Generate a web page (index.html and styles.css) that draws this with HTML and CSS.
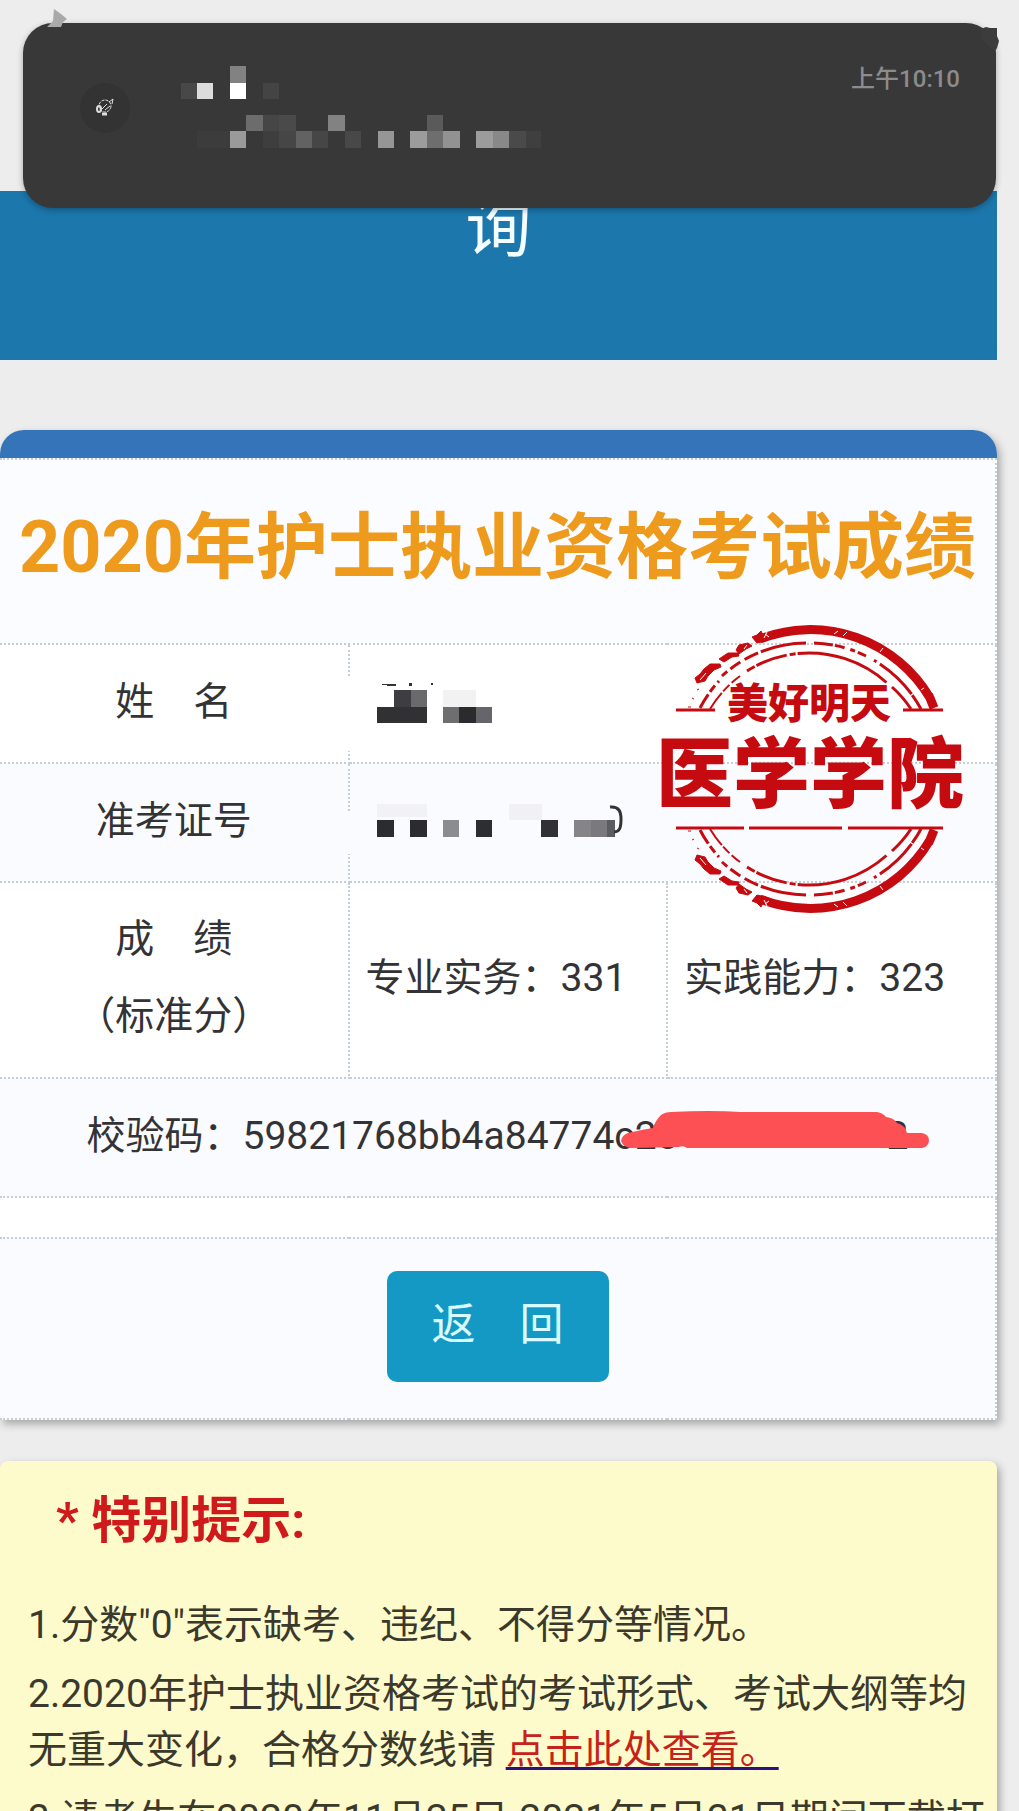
FILE: index.html
```
<!DOCTYPE html>
<html lang="zh-CN">

<head>
    <meta charset="UTF-8">
    <meta name="viewport" content="width=device-width, initial-scale=1">
    <title>成绩查询</title>
    <link rel="stylesheet" href="styles.css">
</head>

<body>

    <aside class="notice">
        <svg class="smudge smudge-left" viewBox="0 0 24 18" aria-hidden="true">
            <path d="M0 18 L6 12 L7 0 L14 5 L20 10 L16 13 L14 18 Z" fill="#a9a9a9" />
        </svg>
        <svg class="smudge smudge-right" viewBox="0 0 18 26" aria-hidden="true">
            <path d="M0 3 L5 1 L9 2 L16 2 L16 10 L18 15 L16 22 L14 25 L8 20 L0 12 Z" fill="#3c3c3c" />
        </svg>
        <svg class="avatar" viewBox="0 0 52 52" aria-hidden="true">
            <circle cx="26" cy="26" r="25" fill="#333" />
            <g fill="none" stroke="#ddd" stroke-width="1">
                <circle cx="26" cy="24" r="6" stroke-dasharray="3 1" />
                <path d="M23 27 L28 22 M26 28 L31 24 M30 20 L34 17 L33 22" />
                <ellipse cx="20" cy="27" rx="2" ry="3" stroke-width="2" />
                <path d="M23 32 H28" stroke-width="3" />
            </g>
        </svg>
        <!-- sender and message are hidden -->
        <svg class="mosaic" viewBox="0 0 360 84" shape-rendering="crispEdges" aria-hidden="true">
            <rect x="49" y="0" width="16" height="17" fill="#828282" />
            <rect x="0" y="17" width="16" height="16" fill="#484848" />
            <rect x="16" y="17" width="16" height="16" fill="#dcdcdc" />
            <rect x="49" y="17" width="16" height="16" fill="#fff" />
            <rect x="82" y="17" width="16" height="16" fill="#444" />
            <rect x="65" y="49" width="17" height="16" fill="#6c6c6c" />
            <rect x="82" y="49" width="16" height="16" fill="#464646" />
            <rect x="98" y="49" width="17" height="16" fill="#4a4a4a" />
            <rect x="147" y="49" width="17" height="16" fill="#828282" />
            <rect x="246" y="49" width="16" height="16" fill="#5a5a5a" />
            <rect x="16" y="65" width="33" height="17" fill="#3c3c3c" />
            <rect x="49" y="65" width="16" height="17" fill="#9a9a9a" />
            <rect x="82" y="65" width="16" height="17" fill="#3e3e3e" />
            <rect x="98" y="65" width="17" height="17" fill="#464646" />
            <rect x="115" y="65" width="16" height="17" fill="#626262" />
            <rect x="131" y="65" width="16" height="17" fill="#464646" />
            <rect x="164" y="65" width="16" height="17" fill="#484848" />
            <rect x="197" y="65" width="16" height="17" fill="#969696" />
            <rect x="229" y="65" width="17" height="17" fill="#9c9c9c" />
            <rect x="246" y="65" width="16" height="17" fill="#6e6e6e" />
            <rect x="262" y="65" width="17" height="17" fill="#929292" />
            <rect x="295" y="65" width="17" height="17" fill="#9c9c9c" />
            <rect x="312" y="65" width="16" height="17" fill="#888" />
            <rect x="328" y="65" width="17" height="17" fill="#4a4a4a" />
            <rect x="345" y="65" width="15" height="17" fill="#3f3f3f" />
        </svg>
        <time class="time">上午10:10</time>
    </aside>

    <header class="banner">询</header>

    <main>
        <section class="card">
            <div class="card-top"></div>
            <table>
                <colgroup>
                    <col class="col-label">
                    <col class="col-score">
                    <col>
                </colgroup>
                <tr class="title">
                    <td colspan="3">
                        <h1>2020年护士执业资格考试成绩</h1>
                    </td>
                </tr>
                <tr class="row">
                    <th scope="row">姓　名</th>
                    <td colspan="2" class="masked">
                        <svg class="mask" viewBox="0 0 240 74" shape-rendering="crispEdges" aria-hidden="true">
                            <rect width="12" height="74" fill="#fff" />
                            <path d="M37 7 L53 7 V9 L46 9 Z M66 6 h3 v3 h-3 Z M88 6 h2 v2 h-2 Z" fill="#333" />
                            <rect x="51" y="13" width="17" height="17" fill="#3e3e42" />
                            <rect x="68" y="13" width="16" height="17" fill="#6a6a6d" />
                            <rect x="34" y="30" width="50" height="16" fill="#313134" />
                            <rect x="100" y="13" width="33" height="17" fill="#f2f2f3" />
                            <rect x="100" y="30" width="16" height="16" fill="#6e6e71" />
                            <rect x="116" y="30" width="17" height="16" fill="#2b2b2e" />
                            <rect x="133" y="30" width="16" height="16" fill="#66666a" />
                        </svg>
                    </td>
                </tr>
                <tr class="row tint">
                    <th scope="row">准考证号</th>
                    <td colspan="2" class="masked">
                        <svg class="mask" viewBox="0 0 290 74" aria-hidden="true">
                            <rect y="16" width="12" height="42" fill="#f9fbfe" />
                            <g shape-rendering="crispEdges">
                                <rect x="34" y="8" width="50" height="13" fill="#f2f2f5" />
                                <rect x="166" y="8" width="33" height="16" fill="#f1f1f3" />
                                <rect x="34" y="24" width="17" height="17" fill="#2c2c30" />
                                <rect x="67" y="24" width="17" height="17" fill="#2c2c30" />
                                <rect x="100" y="24" width="16" height="17" fill="#8c8c8f" />
                                <rect x="133" y="24" width="16" height="17" fill="#2e2e32" />
                                <rect x="198" y="24" width="17" height="17" fill="#313135" />
                                <rect x="231" y="24" width="17" height="17" fill="#858588" />
                                <rect x="248" y="24" width="16" height="17" fill="#7a7a7e" />
                                <rect x="264" y="24" width="8" height="17" fill="#5c5c60" />
                            </g>
                            <path d="M267 11 C276 10 278 16 278 23 C278 31 277 36 271 36" fill="none" stroke="#333" stroke-width="3" />
                        </svg>
                    </td>
                </tr>
                <tr class="row">
                    <th scope="row" class="two-lines">成　绩<br>（标准分）</th>
                    <td>专业实务：331</td>
                    <td>实践能力：323</td>
                </tr>
                <tr class="row tint">
                    <td colspan="3" class="code">校验码：59821768bb4a84774c28<span class="redacted"><svg viewBox="0 0 308 40" aria-hidden="true">
                                <path d="M7 22 Q24 18 32 17 Q34 10 40 4 Q44 1 50 1 Q90 -1 120 1 H256 Q262 2 265 6 Q273 7 276 12 Q284 14 286 22 H301 Q308 23 308 30 Q307 36 301 37 H66 Q62 34 58 36 L10 37 Q2 36 0 30 Q1 24 7 22 Z" fill="#fd5054" />
                            </svg></span>2</td>
                </tr>
                <tr class="gap">
                    <td colspan="3"></td>
                </tr>
                <tr class="action tint">
                    <td colspan="3"><button type="button" class="back">返　回</button></td>
                </tr>
            </table>

            <svg class="stamp" viewBox="0 0 340 320" role="img" aria-label="美好明天医学学院">
                <defs>
                    <g id="ring" fill="none" stroke="#c60b10">
                        <path d="M120 29 A139 139 0 0 1 290 88 L294 98" stroke-width="9" />
                        <path d="M60 98 A126 126 0 0 1 79 71" stroke-width="3" stroke-dasharray="16 3 8 4" />
                        <path d="M82 66 A126 126 0 0 1 166 33" stroke-width="3" stroke-dasharray="7 4 12 5 15 3 50 2" />
                        <path d="M174 33 A126 126 0 0 1 281 99" stroke-width="3" stroke-dasharray="19 2 10 6 5 3 9 9 3 4 44 1" />
                        <path d="M70 99 A116 116 0 0 1 100 66" stroke-width="2" stroke-dasharray="20 2 9 3" />
                        <path d="M107 61 A116 116 0 0 1 247 73" stroke-width="3" stroke-dasharray="9 2 32 3 6 2 96 2" />
                        <path d="M252 77 A116 116 0 0 1 271 99" stroke-width="3" />
                        <path d="M36 100 H75 M263 100 H303" stroke-width="3" />
                        <!-- worn pieces of the outer ring -->
                        <path d="M55 68 L60 64 L64 59 L70 54 L80 54 L81 57 L74 60 L68 66 L65 71 L57 73 Z M79 49 L88 43 L98 43 L99 46 L92 47 L84 52 Z M96 40 L99 35 L108 33 L112 36 L106 39 L99 44 Z M112 27 L117 25 L121 21 L126 31 L117 33 Z M287 82 L293 84 L291 88 Z" fill="#c60b10" stroke-width="1" />
                        <path d="M60 70 L66 63 M104 39 L107 35 M124 28 L127 22 M125 24 L129 27 M194 24 L198 21 M203 26 L207 22 M240 42 L243 38 M281 80 L284 78" stroke="#fff" stroke-width="1" />
                        <path d="M52 88 L54 89 M48 97 L51 97 M57 80 L59 79" stroke-width="1" />
                    </g>
                </defs>
                <use href="#ring" />
                <use href="#ring" transform="matrix(1 0 0 -1 0 318)" />
                <path d="M75 218 H104 M109 218 H202 M208 218 H263" stroke="#c60b10" stroke-width="3" />
                <text class="stamp-small" x="169" y="108">美好明天</text>
                <text class="stamp-big" x="170" y="192">医学学院</text>
            </svg>
        </section>

        <section class="tips">
            <h2>* 特别提示:</h2>
            <p>1.分数"0"表示缺考、违纪、不得分等情况。</p>
            <p>2.2020年护士执业资格考试的考试形式、考试大纲等均无重大变化，合格分数线请 <a href="#">点击此处查看。</a></p>
            <p>3.请考生在2020年11月25日-2021年5月31日期间下载打印成绩单。</p>
        </section>
    </main>

</body>

</html>
```
FILE: styles.css
```
* {
    box-sizing: border-box;
}

body {
    height: 100vh;
    margin: 0;
    padding: 191px 22px 0 0;
    overflow: hidden;
    background: #ededee;
    color: #333336;
    font-family: Roboto, "Noto Sans CJK SC", sans-serif;
    font-size: 39px;
    line-height: 56px;
}

/* notification over the page */
.notice {
    position: absolute;
    top: 23px;
    left: 23px;
    right: 23px;
    z-index: 2;
    display: flex;
    align-items: flex-start;
    height: 185px;
    padding: 43px 36px 0 56px;
    border-radius: 30px;
    background: #383838;
    box-shadow: 0 2px 6px rgba(0, 0, 0, 0.3);
}

.avatar {
    width: 52px;
    height: 52px;
    margin-top: 16px;
}

.mosaic {
    width: 360px;
    height: 84px;
    margin-left: 50px;
}

.time {
    margin-left: auto;
    color: #8c8c8c;
    font-size: 24px;
    font-weight: 500;
    line-height: 26px;
}

.smudge {
    position: absolute;
}

.smudge-left {
    top: -14px;
    left: 24px;
    width: 24px;
    height: 18px;
}

.smudge-right {
    top: 3px;
    right: -3px;
    width: 18px;
    height: 26px;
}

.banner {
    height: 169px;
    background: #1c77ad;
    color: #f4fdff;
    font-size: 66px;
    line-height: 76px;
    text-align: center;
}

/* score card */
.card {
    position: relative;
    margin-top: 70px;
    border-radius: 24px 24px 0 0;
    background: #fff;
    box-shadow: 3px 4px 8px rgba(0, 0, 0, 0.3);
}

.card-top {
    height: 28px;
    border-radius: 24px 24px 0 0;
    background: #3674b9;
}

table {
    width: 100%;
    table-layout: fixed;
    border-collapse: collapse;
}

.col-label {
    width: 35%;
}

.col-score {
    width: 32%;
}

th,
td {
    padding: 0 16px 4px;
    border: 2px dotted #c3ced8;
    font-weight: normal;
    text-align: left;
}

th:first-child,
td:first-child {
    border-left: none;
}

th {
    text-align: center;
}

.title {
    height: 185px;
    background: #fbfcff;
}

.title td {
    padding: 0 0 8px;
}

h1 {
    margin: 0;
    color: #ee9a1c;
    font-size: 72px;
    line-height: 80px;
    text-align: center;
    white-space: nowrap;
}

.row {
    height: 119px;
}

.tint {
    background: #fafbfe;
}

.two-lines {
    height: 196px;
    line-height: 77px;
}

.masked {
    position: relative;
}

.mask {
    position: absolute;
    top: 32px;
    left: -7px;
    height: 74px;
}

.code {
    text-align: center;
    white-space: nowrap;
}

.redacted {
    position: relative;
    display: inline-block;
    width: 208px;
    height: 40px;
    vertical-align: middle;
}

.redacted svg {
    position: absolute;
    top: -7px;
    left: -58px;
    width: 308px;
    height: 40px;
}

.gap {
    height: 41px;
}

.action {
    height: 181px;
}

.action td {
    text-align: center;
}

.back {
    display: inline-block;
    width: 222px;
    height: 111px;
    padding: 0 0 4px;
    border: none;
    border-radius: 10px;
    background: #1499c5;
    color: #d9fbff;
    font-family: inherit;
    font-size: 44px;
    line-height: 56px;
    vertical-align: middle;
    cursor: pointer;
}

.stamp {
    position: absolute;
    top: 180px;
    right: 17px;
    width: 340px;
    height: 320px;
}

.stamp text {
    fill: #c60b10;
    font-family: "Noto Sans CJK SC", sans-serif;
    font-weight: 900;
    text-anchor: middle;
}

.stamp .stamp-small {
    font-size: 41px;
}

.stamp .stamp-big {
    font-size: 77px;
}

/* tips */
.tips {
    margin-top: 41px;
    padding: 24px 8px 24px 28px;
    border-radius: 8px;
    background: #fdfbcb;
    box-shadow: 3px 4px 8px rgba(0, 0, 0, 0.3);
    color: #3b392c;
}

h2 {
    margin: 0 0 40px;
    padding-left: 28px;
    color: #cf191a;
    font-size: 50px;
    line-height: 72px;
}

p {
    margin: 0 0 13px;
}

.tips a {
    color: #c7221a;
    text-decoration: underline 3px #2b127c;
    text-decoration-skip-ink: none;
    text-underline-offset: 4px;
}
```
